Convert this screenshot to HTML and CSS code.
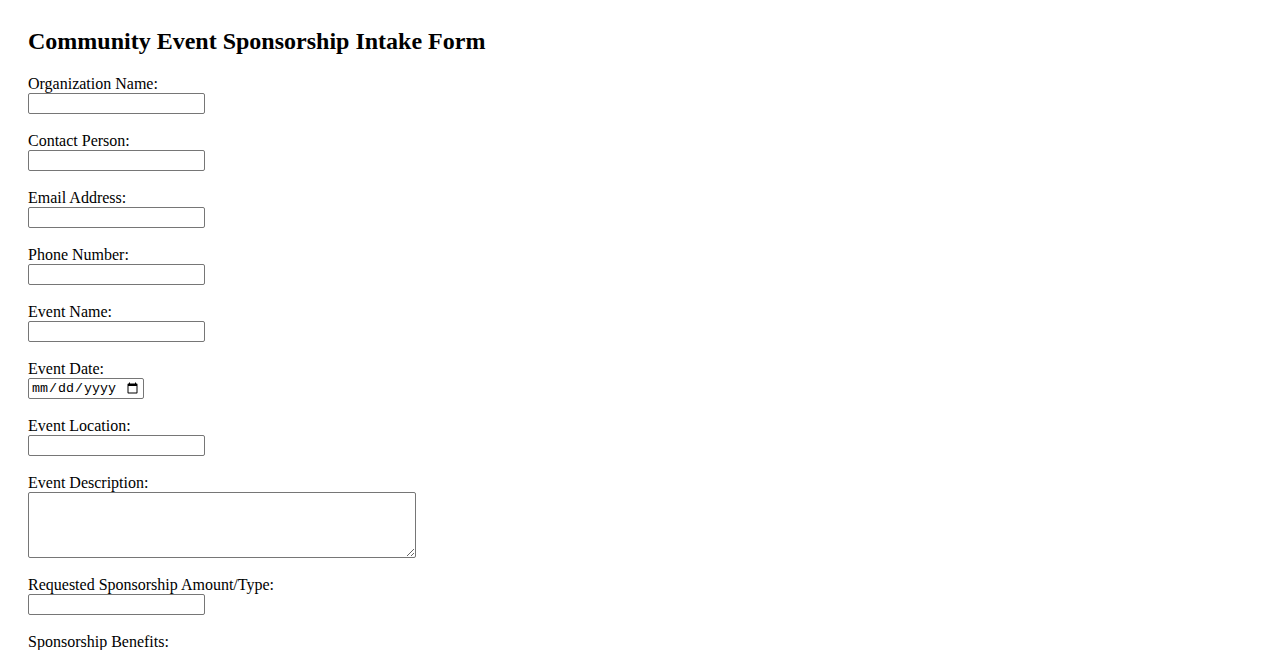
FILE: index.html
```html
<!DOCTYPE html>
<html lang="en">
<head>
<meta charset="utf-8">
<title>Community Event Sponsorship Intake Form</title>
<link rel="stylesheet" href="styles.css">
</head>
<body>
<main class="page">
  <h2 class="title">Community Event Sponsorship Intake Form</h2>
  <form class="form">
    <div class="field">
      <label class="label" for="org">Organization Name:</label>
      <input class="text" type="text" id="org" name="org">
    </div>
    <div class="field">
      <label class="label" for="contact">Contact Person:</label>
      <input class="text" type="text" id="contact" name="contact">
    </div>
    <div class="field">
      <label class="label" for="email">Email Address:</label>
      <input class="text" type="email" id="email" name="email">
    </div>
    <div class="field">
      <label class="label" for="phone">Phone Number:</label>
      <input class="text" type="tel" id="phone" name="phone">
    </div>
    <div class="field">
      <label class="label" for="event">Event Name:</label>
      <input class="text" type="text" id="event" name="event">
    </div>
    <div class="field">
      <label class="label" for="date">Event Date:</label>
      <input class="date" type="date" id="date" name="date">
    </div>
    <div class="field">
      <label class="label" for="location">Event Location:</label>
      <input class="text" type="text" id="location" name="location">
    </div>
    <div class="field">
      <label class="label" for="desc">Event Description:</label>
      <textarea class="area" id="desc" name="desc"></textarea>
    </div>
    <div class="field">
      <label class="label" for="amount">Requested Sponsorship Amount/Type:</label>
      <input class="text" type="text" id="amount" name="amount">
    </div>
    <div class="field">
      <label class="label" for="benefits">Sponsorship Benefits:</label>
      <textarea class="area" id="benefits" name="benefits"></textarea>
    </div>
    <div class="field">
      <button class="submit" type="submit">Submit</button>
    </div>
  </form>
</main>
</body>
</html>
```
FILE: styles.css
```css
html, body {
  margin: 0;
  padding: 0;
  background: #ffffff;
}
body {
  font-family: "Liberation Serif", "Times New Roman", serif;
  font-size: 16px;
  color: #000000;
}
.page {
  padding: 27px 28px 20px;
}
.title {
  margin: 0 0 18px;
  font-size: 24px;
  font-weight: bold;
  line-height: 28px;
}
.form {
  display: flex;
  flex-direction: column;
  gap: 16px;
}
.field {
  display: flex;
  flex-direction: column;
  align-items: flex-start;
}
.label {
  line-height: 18px;
  padding-top: 2px;
}
.text {
  box-sizing: border-box;
  width: 177px;
  height: 21px;
  margin: 0;
  border: 1px solid #767676;
  border-radius: 2px;
  padding: 1px 2px;
  font-family: "Liberation Sans", Arial, sans-serif;
  font-size: 13.33px;
}
.date {
  box-sizing: border-box;
  width: 116px;
  height: 21px;
  margin: 0;
  border: 1px solid #767676;
  border-radius: 2px;
  padding: 1px 2px;
  font-family: "Liberation Mono", "DejaVu Sans Mono", monospace;
  font-size: 13.33px;
}
.area {
  box-sizing: border-box;
  width: 388px;
  height: 66px;
  margin: 0;
  border: 1px solid #767676;
  border-radius: 2px;
  padding: 2px;
  font-family: "Liberation Mono", monospace;
  font-size: 13.33px;
}
.submit {
  font-family: "Liberation Sans", Arial, sans-serif;
  font-size: 13.33px;
}
```
